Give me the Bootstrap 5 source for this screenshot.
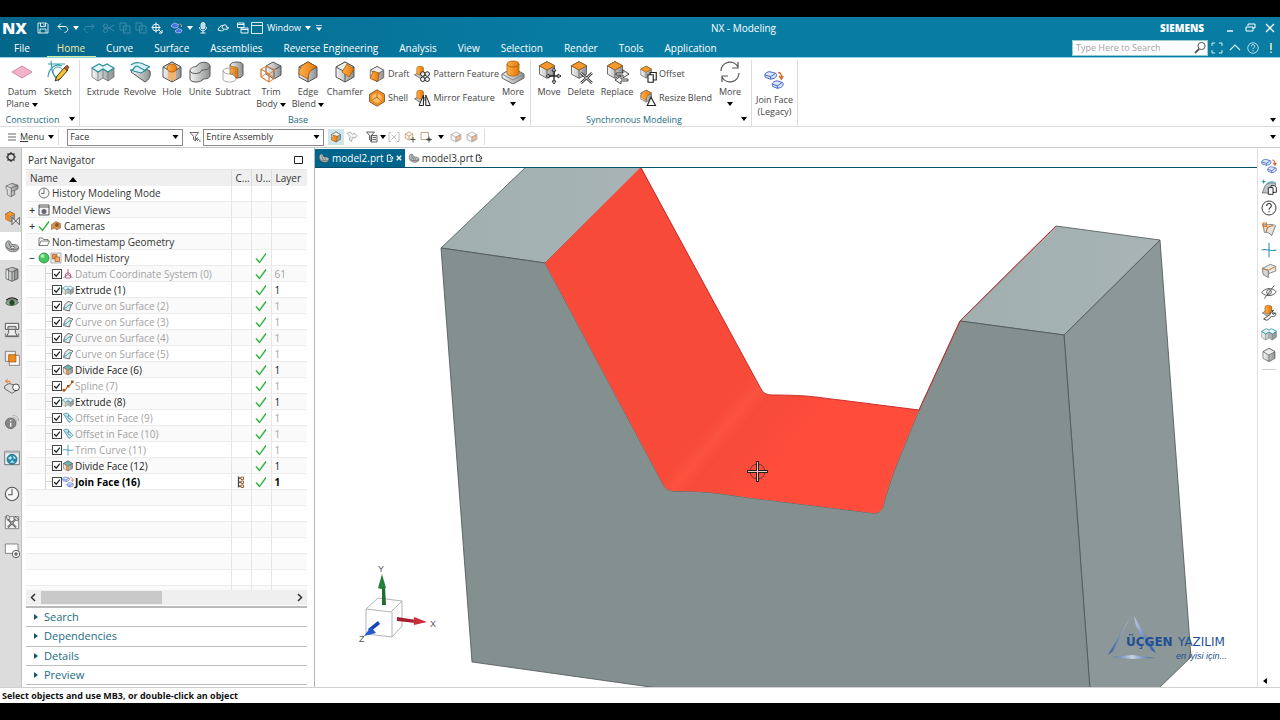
<!DOCTYPE html>
<html lang="en">
<head>
<meta charset="utf-8">
<meta name="viewport" content="width=device-width, initial-scale=1">
<title>NX - Modeling</title>
<link href="https://cdn.jsdelivr.net/npm/bootstrap@5.3.0/dist/css/bootstrap.min.css" rel="stylesheet">
<style>
  :root { --nx-teal:#087ca3; --nx-deep:#00658c; --nx-link:#1b6c80; --nx-line:#dcdcdc; }
  body { font-family:"Open Sans","Noto Sans",sans-serif; font-size:10px; line-height:12px; color:#333; background:#fff; }
  svg { display:block; flex-shrink:0; }
  button { font:inherit; color:inherit; background:none; border:0; padding:0; }
  .app-shell { border-top:17px solid #000; border-bottom:17px solid #000; }
  .i12 { width:12px; height:12px; } .i16 { width:16px; height:16px; } .i24 { width:24px; height:24px; }
  .i14 { width:14px; height:14px; } .i18 { width:18px; height:18px; } .i20 { width:20px; height:24px; }
  .caret { width:0; height:0; border:3px solid transparent; border-top:4px solid currentColor; border-bottom:0; display:inline-block; vertical-align:middle; }
  .carbtn { width:14px; display:flex; justify-content:center; align-items:center; color:#000; }
  .ribbon .caret, .select-row .caret { color:#000; }
  .txt-s { font-size:9px; }

  .head-area { background:linear-gradient(90deg,#03668b,var(--nx-teal) 45%); color:#fff; border-bottom:1px solid #8ed3e6; }
  .title-row { height:22px; }
  .nx-logo { font-size:16px; font-weight:800; width:31px; padding-left:2px; }
  .dimmed { opacity:.22; }
  .brand-name { font-weight:800; font-size:10px; }
  .winbtn { width:20px; } .hdbtn { width:18px; }
  .winbtn, .hdbtn, .qbtn { height:20px; display:flex; align-items:center; justify-content:center; }
  .qbtn { width:16px; } .qcar { width:10px; }
  .menu-row { height:18px; }
  .menu-row .nav-link { padding:0 11px 0 10px; font-size:10px; line-height:18px; color:#fff; border-bottom:1px solid transparent; height:18px; }
  .menu-row .nav-link:first-child { margin-right:6px; }
  .menu-row .nav-link.active { color:#f3e7a1; border-color:#d9ee9a; }
  .find-box { width:136px; height:16px; background:#fff; border:1px solid #9cc; }
  .find-box input { font-size:9px; line-height:12px; padding:0 3px; border:0; background:none; min-height:0; color:#333; border-radius:0; }
  .find-box input::placeholder { color:#a3a3a3; opacity:1; }

  .ribbon { height:69px; border-bottom:1px solid var(--nx-line); color:#444; font-size:9px; }
  .rgroup { border-right:1px solid var(--nx-line); margin:2px 0 0; }
  .rgroup-main { padding:0 3px 0 4px; }
  .rgroup-foot { height:14px; line-height:16px; color:var(--nx-link); }
  .rbtn { display:flex; flex-direction:column; align-items:center; white-space:nowrap; line-height:12px; }
  .rbtn svg { margin-bottom:2px; }
  .w-s { width:28px; } .w-m { width:36px; } .w-l { width:38px; }
  .sbtn { display:flex; align-items:center; height:24px; gap:2px; white-space:nowrap; }
  .scol { padding-top:2px; }
  .vsep { width:1px; height:16px; background:var(--nx-line); }

  .select-row { height:21px; border-bottom:1px solid #c6c6c6; }
  .select-row .form-select { height:17px; font-size:9px; line-height:14px; padding:0 16px 0 2px; border:1px solid #8a8a8a; border-radius:0; color:#333;
    background:#fff url("data:image/svg+xml,%3Csvg xmlns='http://www.w3.org/2000/svg' viewBox='0 0 6 4'%3E%3Cpath d='M0 0h6L3 4z'/%3E%3C/svg%3E") no-repeat right 3px center/7px 4px; }
  .sel-a { width:116px; } .sel-b { width:121px; }
  .lit { background:#cfe6ec; height:16px; }

  .work { height:539px; }
  .res-bar { width:22px; background:#dcdcdc; border-right:1px solid #c2c2c2; }
  .res-bar button { height:28px; display:flex; align-items:center; justify-content:center; width:100%; padding-left:2px; }
  .res-bar .gear { height:18px; margin-bottom:10px; padding:0; }
  .res-bar .current { background:#fff; }
  .nav-panel { width:293px; padding:0 7px 0 4px; border-right:1px solid #b5b5b5; }
  .panel-title { height:21px; padding:2px 4px 0 2px; }
  .tree-wrap { height:421px; overflow:hidden; }
  .tree { table-layout:fixed; width:100%; border-collapse:collapse; white-space:nowrap; }
  .tree th { height:16px; background:#efefef; font-weight:400; font-size:10px; padding:0 0 0 4px; border-right:1px solid #ddd; border-top:1px solid #e4e4e4; }
  .tree td { height:16px; padding:0 0 0 3px; border-right:1px solid #e6e6e6; border-bottom:1px solid #ececec; overflow:hidden; }
  .tree th:last-child, .tree td:last-child { border-right:0; }
  .tree tbody tr:nth-child(even) td { background:#fafafa; }
  .tree .ghost { color:#a2a2a2; }
  .tree .solid td { color:#222; }
  .tree .current-op { font-weight:700; color:#000; }
  .c-sm { width:20px; } .c-ly { width:36px; }
  .node { display:flex; align-items:center; height:15px; }
  .node .twig { width:12px; text-align:center; line-height:10px; margin-left:-3px; font-weight:600; }
  .node .lead-in { width:23px; height:15px; display:flex; justify-content:flex-end; align-items:center; flex-shrink:0; }
  .node .lead-in i { width:7px; height:15px; border-left:1px solid #d5d5d5; background:linear-gradient(#d5d5d5,#d5d5d5) 0 50%/100% 1px no-repeat; }
  .node .form-check-input { width:10px; height:10px; margin:0; border:1px solid #444; border-radius:0; flex-shrink:0; background-color:#fff; }
  .node .form-check-input:checked { background:#fff url("data:image/svg+xml,%3Csvg xmlns='http://www.w3.org/2000/svg' viewBox='0 0 10 10'%3E%3Cpath d='M1.5 5 4 7.8 8.6 2' fill='none' stroke='%23222' stroke-width='1.5'/%3E%3C/svg%3E") center/100%; }
  .node label { margin-left:1px; } .node .nm { margin-left:2px; }
  .hscroll { height:15px; background:#efefef; }
  .hscroll .thumb { width:43%; height:13px; background:#c9c9c9; }
  .fold { height:79px; border-top:2px solid #b9b9b9; margin-top:1px; }
  .fold button { flex:1 1 0; display:flex; align-items:center; gap:6px; padding-left:8px; color:var(--nx-link); font-size:11px; line-height:14px; border-bottom:1px solid #bcbcbc; text-align:left; }
  .fold button::before { content:""; border:3px solid transparent; border-left:4px solid #155a6b; border-right:0; }

  .doc-tabs { height:20px; border-bottom:1px solid #08506c; padding-top:1px; }
  .doc-tab { display:flex; align-items:center; gap:2px; padding:0 3px; color:#333; text-decoration:none; }
  .doc-tab.active { background:var(--nx-deep); color:#fff; }
  .scene { min-height:0; }
  .scene svg { width:100%; height:100%; }
  .side-bar { width:23px; border-left:1px solid #e0e0e0; padding-top:7px; }
  .side-bar button { height:21px; width:100%; display:flex; justify-content:center; align-items:center; }
  .side-bar .expander { height:12px; }
  .status-row { height:16px; border-top:1px solid #d0d0d0; font-size:9px; font-weight:700; color:#111; padding-left:2px; line-height:15px; }
</style>
</head>
<body>
<svg width="0" height="0" class="position-absolute" aria-hidden="true">
  <defs>
    <linearGradient id="g" x1="0" x2="1"><stop offset="0" stop-color="#f4f4f4"/><stop offset="1" stop-color="#8d9091"/></linearGradient>
    <linearGradient id="o" x1="0" x2="1"><stop offset="0" stop-color="#ffb14a"/><stop offset="1" stop-color="#e57708"/></linearGradient>
    <symbol id="plane" viewBox="0 0 24 24"><path d="M2 12 12 6l10 6-10 6z" fill="#f5b3cb" stroke="#c97796" stroke-width=".8"/></symbol>
    <symbol id="sketch" viewBox="0 0 24 24"><path d="M2 4h17M5 1c1 8 0 14 8 20M2 17C3 8 9 3 16 6" fill="none" stroke="#3c9fb0" stroke-width="1.2"/><circle cx="12" cy="12" r="5" fill="none" stroke="#3c9fb0"/><path d="m9 21 2-5 8-9 3 3-8 9z" fill="#f0c332" stroke="#4a3b16"/><path d="m18 8 3-3 2 2-2 4z" fill="#b9553a" stroke="#4a3b16" stroke-width=".6"/></symbol>
    <symbol id="extrude" viewBox="0 0 24 24"><path d="M1 8v9l6 4 5-3 5 3 6-4V8l-6 4-5-3-5 3z" fill="url(#g)" stroke="#6b7375" stroke-width=".8"/><path d="m1 8 7-4 4 2 4-2 7 4-6 4-5-3-5 3z" fill="#e4f6f8" stroke="#2a8e9d" stroke-width="1.2"/><path d="M7 12v9M17 12v9M12 9v9" stroke="#5f6a6c" stroke-width=".7"/></symbol>
    <symbol id="revolve" viewBox="0 0 24 24"><path d="m3 12 14 10c4-2 6-6 5-11L9 4z" fill="url(#g)" stroke="#555"/><path d="M3 5c4-4 7-2 10-2l9 4c-4 0-5 5-9 6L2 10c5 1 3-4 7-4l9 5" fill="#d7f0f3" stroke="#2a8e9d" stroke-width="1.2"/></symbol>
    <symbol id="cube" viewBox="0 0 24 24"><path d="m12 2 9 5v10l-9 5-9-5V7z" fill="url(#g)" stroke="#555"/><path d="m3 7 9 5 9-5-9-5z" fill="#eceded" stroke="#555"/><path d="M12 12v10" stroke="#555"/></symbol>
    <symbol id="hole" viewBox="0 0 24 24"><use href="#cube"/><path d="M8 11h8v8l-4 2-4-2z" fill="#efb473"/><ellipse cx="12" cy="8" rx="5" ry="4" fill="url(#o)" stroke="#8b4a06" stroke-width=".7"/></symbol>
    <symbol id="unite" viewBox="0 0 24 24"><path d="M2 11c0-4 4-4 7-5 2-5 12-5 13 0v9c0 3-3 4-7 4-1 4-13 4-13 0z" fill="url(#g)" stroke="#555"/><path d="M2 11c2 4 11 3 12-1 4 0 8-1 8-4" fill="none" stroke="#555"/></symbol>
    <symbol id="subtract" viewBox="0 0 24 24"><path d="M9 5c1-4 13-4 13 0v9c0 3-3 4-7 4z" fill="url(#g)" stroke="#555"/><path d="M9 5c3 3 8 1 8 4v9c-3 0-4-4-8-4z" fill="url(#o)" stroke="#9b5204" stroke-width=".6"/><path d="M2 11c0-4 13-4 13 0v8c0 4-13 4-13 0zm0 0c2 4 11 4 13 0" fill="none" stroke="#888" stroke-width=".7"/></symbol>
    <symbol id="trim" viewBox="0 0 24 24"><path d="m7 6 7-4 8 4v9l-7 4-8-5z" fill="url(#g)" stroke="#555"/><path d="m7 6 8 4 7-4m-7 4v9" fill="none" stroke="#555"/><path d="m2 9 6-3 8 4-6 4zv8l8 5V14m-8-5 8 5m0 8 6-4" fill="none" stroke="#e0853b"/><path d="M2 9v8l8 5v-8M2 17l6-4 8 5" fill="none" stroke="#e0853b"/></symbol>
    <symbol id="blend" viewBox="0 0 24 24"><use href="#cube"/><path d="M3 14c0-6 3-9 9-12l9 5c-6 2-9 6-9 12z" fill="url(#o)" stroke="#9b5204" stroke-width=".7"/></symbol>
    <symbol id="chamfer" viewBox="0 0 24 24"><use href="#cube"/><path d="m14 4 7 5-5 8-7-5z" fill="url(#o)" stroke="#9b5204" stroke-width=".7"/></symbol>
    <symbol id="ocube" viewBox="0 0 24 24"><use href="#cube"/><path d="m3 7 9 5 9-5-9-5z" fill="#f59a2a" stroke="#9b5204" stroke-width=".8"/></symbol>
    <symbol id="draft" viewBox="0 0 24 24"><use href="#cube"/><path d="m7 8 8 3-2 11-10-4z" fill="url(#o)" stroke="#9b5204"/></symbol>
    <symbol id="shell" viewBox="0 0 24 24"><path d="m12 1 10 6v10l-10 6-10-6V7z" fill="#ef8b1e" stroke="#6b4a27"/><path d="m12 5 6 4v7l-6 3-7-4V9z" fill="#ffbc67"/><path d="M5 15 12 11V5m0 6 6 5" fill="none" stroke="#a4580c"/></symbol>
    <symbol id="pattern" viewBox="0 0 24 24"><path d="m2 13 8-4 8 4-8 5z" fill="#ccc" stroke="#555"/><path d="M5 4c0-3 9-3 9 0v7c0 3-9 3-9 0z" fill="url(#o)" stroke="#9b5204" stroke-width=".7"/><g fill="#eee" stroke="#222" stroke-width="1.3"><circle cx="13" cy="12" r="3"/><circle cx="19" cy="12" r="3"/><circle cx="13" cy="19" r="3"/><circle cx="19" cy="19" r="3"/></g></symbol>
    <symbol id="mirror" viewBox="0 0 24 24"><path d="m2 13 8-4 8 4-8 5z" fill="#ccc" stroke="#555"/><path d="M5 4c0-3 9-3 9 0v7c0 3-9 3-9 0z" fill="url(#o)" stroke="#9b5204" stroke-width=".7"/><path d="M14 8v14H8zm3 0v14h6z" fill="#eee" stroke="#222" stroke-width="1.3"/></symbol>
    <symbol id="boss" viewBox="0 0 24 24"><path d="m1 14 11-6 11 6v4l-11 6-11-6z" fill="url(#g)" stroke="#666"/><path d="m1 14 11 6 11-6" fill="none" stroke="#888"/><path d="M6 4c0-4 12-4 12 0v9c0 4-12 4-12 0z" fill="url(#o)" stroke="#a9640f" stroke-width=".8"/><path d="M6 4c0 4 12 4 12 0" fill="none" stroke="#a9640f"/></symbol>
    <symbol id="move" viewBox="0 0 24 24"><svg width="20" height="20" viewBox="0 0 24 24"><use href="#ocube"/></svg><path d="M17 9v14M10 16h14" stroke="#222" stroke-width="1.3"/><path d="m17 8-2 3h4zm0 16-2-3h4zm-8-8 3-2v4zm15 0-3-2v4z" fill="#fff" stroke="#222" stroke-width=".9"/></symbol>
    <symbol id="delete" viewBox="0 0 24 24"><svg width="20" height="20" viewBox="0 0 24 24"><use href="#ocube"/></svg><path d="m12 13 11 10m0-10L12 23" stroke="#333" stroke-width="2.4"/><path d="m12 13 11 10m0-10L12 23" stroke="#eee" stroke-width="1"/></symbol>
    <symbol id="replace" viewBox="0 0 24 24"><svg width="20" height="20" viewBox="0 0 24 24"><use href="#ocube"/></svg><path d="M11 13h7v-3l6 4-6 4v-3h-7zM23 19h-7v-3l-6 4 6 4v-3h7z" fill="#eee" stroke="#333" stroke-width=".9"/></symbol>
    <symbol id="offset" viewBox="0 0 24 24"><svg width="19" height="19" viewBox="0 0 24 24"><use href="#ocube"/></svg><path d="M12 13h7v10h-7zM15 13v-3h8v10h-4" fill="#fff" stroke="#222" stroke-width="1.5"/></symbol>
    <symbol id="resize" viewBox="0 0 24 24"><svg width="19" height="19" viewBox="0 0 24 24"><use href="#blend"/></svg><path d="m16 11 6 11H11z" fill="#fff" stroke="#222" stroke-width="1.5"/></symbol>
    <symbol id="cycle" viewBox="0 0 24 24"><path d="M3 11a9 9 0 0 1 17-4M21 13a9 9 0 0 1-17 4M20 2v6h-6M4 22v-6h6" fill="none" stroke="#555" stroke-width="1.2"/></symbol>
    <symbol id="join" viewBox="0 0 24 24"><g fill="#dbe5fc" stroke="#4668c8" stroke-width="1.2"><path d="M1 6c0-2 3-4 6-4l7 2c2 1 1 5-2 6l-4 1-6-2c-1 0-1-2-1-3z"/><path d="M10 17c0-2 3-4 6-4l6 2c2 1 1 5-2 6l-4 1-5-2c-1 0-1-2-1-3z"/><path d="m1 6 7 2 6-4M8 8v3m2 6 6 2 6-4m-6 4v3" fill="none"/></g><path d="M17 3c4 0 4 3 4 6m-3-2 3 4 2-4" fill="none" stroke="#d3682c" stroke-width="1.6"/></symbol>
    <symbol id="clock" viewBox="0 0 24 24"><circle cx="12" cy="12" r="10" fill="#f6f6f6" stroke="#555" stroke-width="1.6"/><path d="M12 4v9H6" fill="none" stroke="#555" stroke-width="1.6"/></symbol>
    <symbol id="views" viewBox="0 0 24 24"><path d="M2 2h20v20H2zM2 6h20" fill="#f4f4f4" stroke="#444" stroke-width="1.8"/><circle cx="12" cy="15" r="5" fill="#667"/></symbol>
    <symbol id="folder" viewBox="0 0 24 24"><path d="M2 19V4h7l2 3h9v3M2 19l4-9h17l-4 9z" fill="none" stroke="#555" stroke-width="1.5"/></symbol>
    <symbol id="tick" viewBox="0 0 24 24"><path d="m2 13 7 8L22 3" fill="none" stroke="#2fb440" stroke-width="2.8"/></symbol>
    <symbol id="cam" viewBox="0 0 24 24"><path d="m3 9 9-6 9 4v9l-8 4-3-4-7 3z" fill="#d99350" stroke="#6e4c2a"/><circle cx="14" cy="10" r="4" fill="#8b5b2c"/></symbol>
    <symbol id="ball" viewBox="0 0 24 24"><circle cx="12" cy="12" r="10" fill="#45c95e" stroke="#277a36" stroke-width="1.5"/><circle cx="9" cy="8" r="4" fill="#a7eeb4"/></symbol>
    <symbol id="hist" viewBox="0 0 24 24"><path d="M2 2h20v20H2z" fill="#f4f0ea" stroke="#666"/><path d="M5 5h9v9H5z" fill="#f09331" stroke="#633"/><path d="M10 10h9v9h-9z" fill="#f6ad5a" stroke="#633"/></symbol>
    <symbol id="csys" viewBox="0 0 24 24"><path d="M12 13V2M12 13 3 19M12 13l9 6M7 12v8h10v-8l-5-3z" fill="none" stroke="#b5668f" stroke-width="2"/></symbol>
    <symbol id="cosurf" viewBox="0 0 24 24"><path d="M3 19C4 11 8 5 13 3l9 3c-4 4-6 9-7 16z" fill="#e1ecec" stroke="#444" stroke-width="1.5"/><path d="M4 16c7 1 7-8 15-6" fill="none" stroke="#2a8e9d" stroke-width="2"/></symbol>
    <symbol id="divide" viewBox="0 0 24 24"><use href="#cube"/><path d="m3 7 9-5 9 5-9 5z" fill="#68b6b6" stroke="#555"/><path d="m3 7 9 5v10l-4-2V12z" fill="#e69343"/></symbol>
    <symbol id="spline" viewBox="0 0 24 24"><path d="M2 21c9 2 5-8 11-9 5-1 4-5 9-9" fill="none" stroke="#c96a20" stroke-width="2.5"/><path d="M1 18h5v5H1zM10 10h5v5h-5zM18 1h5v5h-5z" fill="#a4541a"/></symbol>
    <symbol id="oface" viewBox="0 0 24 24"><path d="m3 4 8-2 11 13-8 6z" fill="#d8eef3" stroke="#3b8ea5" stroke-width="1.6"/><path d="m8 7 9 9M12 5l2 5" stroke="#3b8ea5" stroke-width="2"/></symbol>
    <symbol id="cross" viewBox="0 0 24 24"><path d="M12 1v22M1 12c6-3 14 3 22 0" fill="none" stroke="#2c93b8" stroke-width="1.6"/></symbol>
    <symbol id="mark3" viewBox="0 0 24 24"><path d="M7 1v22M7 4h8M7 12h8M7 20h8" stroke="#444" stroke-width="2.5"/><path d="M12 2h5v5h-5zM12 10h5v5h-5zM12 18h5v5h-5z" fill="#fff" stroke="#a36332" stroke-width="2"/></symbol>
    <symbol id="disc" viewBox="0 0 24 24"><path d="M3 14C1 8 5 2 9 5l3 5c8-1 11 3 10 6-2 6-16 7-19-2z" fill="#b8bcbd" stroke="#444"/><path d="M4 13c2 6 15 5 18 2M7 7l3 7" fill="none" stroke="#444"/><ellipse cx="13" cy="14" rx="3" ry="1.6" fill="#fff" stroke="#444"/></symbol>
    <symbol id="gear" viewBox="0 0 24 24"><circle cx="12" cy="12" r="6.5" fill="none" stroke="#333" stroke-width="2.6"/><path d="M12 2v3M12 19v3M2 12h3M19 12h3M5 5l2 2M17 17l2 2M5 19l2-2M17 7l2-2" stroke="#333" stroke-width="2.4"/></symbol>
    <symbol id="asm" viewBox="0 0 24 24"><path d="m3 6 9-4 9 3v5l-5 3v6l-6 3-5-3v-8l-2-1z" fill="url(#g)" stroke="#555"/><path d="m3 6 8 3 10-4M11 9v13M11 14l5-2" fill="none" stroke="#555"/></symbol>
    <symbol id="constr" viewBox="0 0 24 24"><svg width="18" height="20" viewBox="0 0 24 24"><use href="#ocube"/><path d="m3 7 9 5v10l-9-5z" fill="#ee8a1e"/></svg><path d="m12 11 11 11V11L12 22z" fill="#eee" stroke="#333" stroke-width="1.2"/></symbol>
    <symbol id="book" viewBox="0 0 24 24"><path d="M3 5 13 2l8 3v14l-9 4-9-4z" fill="url(#g)" stroke="#444"/><path d="m3 5 9 4v14M12 9l9-4M7 4v17M16 7v14" fill="none" stroke="#444"/></symbol>
    <symbol id="eye" viewBox="0 0 24 24"><path d="M1 14C6 5 17 5 23 13c-6 6-16 7-22 1z" fill="#8cae8c" stroke="#222"/><circle cx="12" cy="13" r="4.5" fill="#23492a"/><path d="M2 9C8 3 17 4 22 9" fill="none" stroke="#222" stroke-width="2"/></symbol>
    <symbol id="proc" viewBox="0 0 24 24"><path d="M2 2h20v9h-4v-4H6v4H2zM7 11h10v5l3 5H4l3-5z" fill="#eee" stroke="#444" stroke-width="1.3"/><path d="M2 17v5h20v-5" fill="none" stroke="#444"/></symbol>
    <symbol id="squares" viewBox="0 0 24 24"><path d="M2 2h15v15H2z" fill="#eee" stroke="#555"/><path d="M8 8h15v15H8z" fill="#fff" stroke="#555"/><path d="M7 7h11v11H7z" fill="#f08a1d" stroke="#9b5204"/></symbol>
    <symbol id="tag" viewBox="0 0 24 24"><path d="m1 12 7-4 13 5v4l-9 6L1 16z" fill="#ddd" stroke="#333"/><circle cx="18" cy="14" r="5" fill="#fff" stroke="#333" stroke-width="1.3"/><path d="M2 5h7v5M2 5l4-3m-4 3 4 3" fill="none" stroke="#e0853b" stroke-width="1.5"/></symbol>
    <symbol id="info" viewBox="0 0 24 24"><path d="M13 2c6 0 9 4 9 9M13 5c4 0 6 3 6 6" fill="none" stroke="#aaa" stroke-width="1.3"/><circle cx="10" cy="14" r="8" fill="#858585" stroke="#555"/><path d="M10 9v2m0 2v6" stroke="#fff" stroke-width="2"/></symbol>
    <symbol id="globe" viewBox="0 0 24 24"><path d="M1 2h22v20H1z" fill="#e5f1f7" stroke="#444"/><path d="M1 2h22v3H1z" fill="#bbb"/><circle cx="12" cy="14" r="7.5" fill="#2687ad" stroke="#1c5870"/><path d="M6 12l4-3 2 3-3 3zM13 8l5 4-3 2zM9 19l3-4 4 4z" fill="#bfe6ef"/></symbol>
    <symbol id="tools" viewBox="0 0 24 24"><path d="M2 4h20v18H2z" fill="#f4f4f4" stroke="#555"/><path d="m6 8 12 12M18 7 6 20" stroke="#444" stroke-width="3"/><path d="m6 8 12 12M18 7 6 20" stroke="#ddd"/><path d="M3 3c3-3 7 1 5 5l-3 1z" fill="#ddd" stroke="#444"/><path d="m14 6 4-2 4 5-3 1z" fill="#ddd" stroke="#444"/></symbol>
    <symbol id="addwin" viewBox="0 0 24 24"><path d="M2 3h19v14H2z" fill="#fff" stroke="#555"/><circle cx="18" cy="18" r="5.5" fill="#fff" stroke="#333" stroke-width="1.2"/><path d="M18 15v6M15 18h6" stroke="#333" stroke-width="1.4"/></symbol>
    <symbol id="help" viewBox="0 0 24 24"><circle cx="12" cy="12" r="10.5" fill="none" stroke="currentColor" stroke-width="1.4"/><path d="M8.5 9c0-5 7-5 7-.5 0 3-3.5 3-3.5 6M12 16.5v2" fill="none" stroke="currentColor" stroke-width="1.6"/></symbol>
    <symbol id="sheet" viewBox="0 0 24 24"><path d="M3 5c7 2 11-2 19 2l-6 15C14 18 9 17 5 17z" fill="#e2e2e2" stroke="#555"/><path d="M8 17c0-7 2-9 10-10M3 3h5v5H3z" fill="none" stroke="#dc7a28" stroke-width="1.8"/></symbol>
    <symbol id="extract" viewBox="0 0 24 24"><path d="M2 21 6 10c5-5 12-5 16-3l-3 14z" fill="#bfc7c8" stroke="#555"/><path d="M4 1v6M1 4h6M8 8c4-4 10-5 14-2" stroke="#2a9aa8" stroke-width="1.5" fill="none"/><path d="M11 13h7v10h-7zM15 13v-3h5l3 3v7h-5" fill="#fff" stroke="#222" stroke-width="1.4"/></symbol>
    <symbol id="foldface" viewBox="0 0 24 24"><path d="m2 8 12-6 8 3v7l-11 4z" fill="#e8e8e8" stroke="#555"/><path d="m2 8 9 3v11l-8-5z" fill="#d6d6d6" stroke="#555"/><path d="m2 8 9 3 11-6" fill="none" stroke="#d07a31" stroke-width="1.5"/></symbol>
    <symbol id="hide" viewBox="0 0 24 24"><path d="M1 13C6 5 18 5 23 12c-6 7-16 7-22 1zM20 2 5 22" fill="none" stroke="#555" stroke-width="1.4"/><circle cx="12" cy="12" r="3.5" fill="none" stroke="#555" stroke-width="1.4"/></symbol>
    <symbol id="wrench" viewBox="0 0 24 24"><path d="m2 12 9-5 10 5-9 6z" fill="#ccc" stroke="#555"/><path d="M6 3c0-3 10-3 10 0v8c0 3-10 3-10 0z" fill="url(#o)" stroke="#9b5204"/><path d="m4 21 5 2 7-6c5 1 7-2 6-5l-4 2-2-3 3-3c-4 0-6 3-5 6z" fill="#fff" stroke="#333" stroke-width="1.3"/></symbol>
    <symbol id="save" viewBox="0 0 24 24"><path d="M2 2h17l3 3v17H2zM7 2v7h10V2M6 22v-8h12v8M14 4v3" fill="none" stroke="#fff" stroke-width="1.7"/></symbol>
    <symbol id="undo" viewBox="0 0 24 24"><path d="M8 3 2 9l6 6M2 9h14c8 1 7 11-1 12" fill="none" stroke="currentColor" stroke-width="1.9"/></symbol>
    <symbol id="redo" viewBox="0 0 24 24"><path d="m16 3 6 6-6 6M22 9H8C0 10 1 20 9 21" fill="none" stroke="currentColor" stroke-width="1.9"/></symbol>
    <symbol id="cut" viewBox="0 0 24 24"><path d="m9 14 13-8M9 10l13 8" stroke="#fff" stroke-width="2"/><circle cx="5" cy="8" r="4" fill="none" stroke="#fff" stroke-width="2"/><circle cx="5" cy="17" r="4" fill="none" stroke="#fff" stroke-width="2"/></symbol>
    <symbol id="copy" viewBox="0 0 24 24"><path d="M2 2h12v14H2zM9 8h13v14H9z" fill="none" stroke="#fff" stroke-width="2"/></symbol>
    <symbol id="aim" viewBox="0 0 24 24"><circle cx="10" cy="11" r="7" fill="none" stroke="#fff" stroke-width="1.8"/><path d="M10 1v20M1 11h18M15 15l7 7m0-6v6h-6" stroke="#fff" stroke-width="2" fill="none"/></symbol>
    <symbol id="joinlite" viewBox="0 0 24 24"><path d="m1 6 6-4 8 3-2 6-6 1-6-3zM9 17l6-4 7 3-2 5-6 1-5-2z" fill="#4a6fe0" stroke="#cfdcff" stroke-width="1.2"/><path d="M17 4c4 0 4 3 4 6" fill="none" stroke="#e8a070" stroke-width="2"/></symbol>
    <symbol id="mic" viewBox="0 0 24 24"><rect x="8" y="1" width="8" height="13" rx="4" fill="#b8dce7" stroke="#fff" stroke-width="1.6"/><path d="M5 10c0 10 14 10 14 0M12 18v4M7 22h10" fill="none" stroke="#fff" stroke-width="1.8"/></symbol>
    <symbol id="hand" viewBox="0 0 24 24"><path d="M2 16c2-6 5-9 10-9 4-3 9 0 6 3l5 1c0 4-5 4-8 3-3 5-8 4-13 2zM12 7c-2 2-3 7 2 7" fill="none" stroke="#fff" stroke-width="2"/></symbol>
    <symbol id="cascade" viewBox="0 0 24 24"><path d="M1 2h13v9H1zM1 5h13M8 12h14v10H8zM8 15h14" fill="none" stroke="#fff" stroke-width="1.8"/></symbol>
    <symbol id="winic" viewBox="0 0 24 24"><path d="M1 1h22v22H1zM1 7h22" fill="none" stroke="#fff" stroke-width="1.7"/></symbol>
    <symbol id="funnel" viewBox="0 0 24 24"><path d="M2 3h17l-6 8v9l-4-3v-6z" fill="#eee" stroke="#444" stroke-width="1.5"/><path d="M22 22c0-5-3-6-7-6m3-3-4 3 4 4" fill="none" stroke="#444" stroke-width="1.6"/></symbol>
    <symbol id="filt2" viewBox="0 0 24 24"><path d="M1 2h16l-6 7v11l-4-3V9zM10 9h12v13H10zM13 13h7M13 17h7" fill="#eee" stroke="#444" stroke-width="1.6"/></symbol>
    <symbol id="desel" viewBox="0 0 24 24"><path d="m2 5 6-3 5 4 5-1 4 4-4 5-5-1-2 8-4-3 1-7z" fill="#f2f2f2" stroke="#999" stroke-width="1.5"/></symbol>
    <symbol id="snap" viewBox="0 0 24 24"><path d="M6 3H2v18h4M18 3h4v18h-4M7 7l10 10M7 17 17 7" fill="none" stroke="#aaa" stroke-width="1.5"/></symbol>
    <symbol id="selbox" viewBox="0 0 24 24"><path d="M2 3h15v14H2z" fill="#fff" stroke="#a58b58" stroke-width="1.5"/><path d="M18 11v12M12 17h12M15 14l6 6m0-6-6 6" stroke="#333" stroke-width="1.6"/></symbol>
    <symbol id="selcube" viewBox="0 0 24 24"><svg width="20" height="20" viewBox="0 0 24 24"><path d="m12 2 9 5v10l-9 5-9-5V7zM3 7l9 5 9-5M12 12v10" fill="#fdf0dc" stroke="#a58b58" stroke-width="1.5"/></svg><path d="M18 12v11M13 17h10" stroke="#555" stroke-width="2"/></symbol>
    <symbol id="wire" viewBox="0 0 24 24"><path d="m12 2 10 5v10l-10 5-10-5V7zM2 7l10 5 10-5M12 12v10" fill="#f4f4f4" stroke="#999" stroke-width="1.3"/><path d="M12 12v8l8-4V8z" fill="#f0c4a0" stroke="#a97b58"/></symbol>
    <symbol id="docmod" viewBox="0 0 24 24"><path d="M15 3H4v19h14v-4M11 3l6 4-4 5M20 8v7h-7" fill="none" stroke="currentColor" stroke-width="3"/></symbol>
  </defs>
</svg>

<div class="app-shell d-flex flex-column">
  <header class="head-area">
    <div class="title-row d-flex align-items-center">
      <span class="nx-logo">NX</span>
      <button class="qbtn ms-1" aria-label="Save"><svg class="i12"><use href="#save"/></svg></button>
      <button class="qbtn ms-1" aria-label="Undo"><svg class="i12"><use href="#undo"/></svg></button>
      <button class="qbtn qcar" aria-label="Undo list"><span class="caret"></span></button>
      <button class="qbtn dimmed" aria-label="Redo"><svg class="i12"><use href="#redo"/></svg></button>
      <button class="qbtn dimmed ms-1" aria-label="Cut"><svg class="i12"><use href="#cut"/></svg></button>
      <button class="qbtn dimmed" aria-label="Copy"><svg class="i12"><use href="#copy"/></svg></button>
      <button class="qbtn dimmed" aria-label="Paste"><svg class="i12"><use href="#copy"/></svg></button>
      <button class="qbtn" aria-label="Repeat command"><svg class="i12"><use href="#aim"/></svg></button>
      <button class="qbtn ms-1" aria-label="Join Face"><svg class="i12"><use href="#joinlite"/></svg></button>
      <button class="qbtn qcar" aria-label="Recent commands"><span class="caret"></span></button>
      <button class="qbtn" aria-label="Voice"><svg class="i12"><use href="#mic"/></svg></button>
      <button class="qbtn ms-1" aria-label="Touch mode"><svg class="i12"><use href="#hand"/></svg></button>
      <button class="qbtn ms-1" aria-label="Switch window"><svg class="i12"><use href="#cascade"/></svg></button>
      <button class="d-flex align-items-center gap-1 txt-s"><svg class="i12"><use href="#winic"/></svg><span>Window</span><span class="caret"></span></button>
      <button class="qbtn" aria-label="Customize toolbar"><svg width="6" height="6" viewBox="0 0 7 7"><path d="M0 0h7v1H0zM0 3h7L3.5 7z" fill="#fff"/></svg></button>
      <span class="flex-fill text-center">NX - Modeling</span>
      <span class="brand-name me-3">SIEMENS</span>
      <button class="winbtn" aria-label="Minimize"><svg class="i12" viewBox="0 0 12 12"><path d="M3 9h6" stroke="#fff" stroke-width="1.4"/></svg></button>
      <button class="winbtn" aria-label="Restore"><svg class="i12" viewBox="0 0 12 12"><path d="M4 4V2h7v4H9M2 5h7v4H2z" fill="none" stroke="#fff"/></svg></button>
      <button class="winbtn" aria-label="Close"><svg class="i12" viewBox="0 0 12 12"><path d="m2 2 8 8m0-8-8 8" stroke="#fff" stroke-width="1.3"/></svg></button>
    </div>
    <div class="menu-row d-flex align-items-center">
      <nav class="nav flex-nowrap flex-fill ps-1">
        <a class="nav-link" href="#">File</a><a class="nav-link active" href="#">Home</a><a class="nav-link" href="#">Curve</a><a class="nav-link" href="#">Surface</a><a class="nav-link" href="#">Assemblies</a><a class="nav-link" href="#">Reverse Engineering</a><a class="nav-link" href="#">Analysis</a><a class="nav-link" href="#">View</a><a class="nav-link" href="#">Selection</a><a class="nav-link" href="#">Render</a><a class="nav-link" href="#">Tools</a><a class="nav-link" href="#">Application</a>
      </nav>
      <div class="find-box d-flex align-items-center">
        <input class="form-control shadow-none" type="text" placeholder="Type Here to Search" aria-label="Search commands">
        <svg class="i14" viewBox="0 0 14 14"><circle cx="8.5" cy="5" r="3.6" fill="none" stroke="#555"/><path d="M6 8 2 12" stroke="#555" stroke-width="1.8"/></svg>
      </div>
      <button class="hdbtn" aria-label="Full screen"><svg class="i12" viewBox="0 0 12 12"><path d="M1 4V1h3M8 1h3v3M11 8v3H8M4 11H1V8" fill="none" stroke="#d5edf3"/></svg></button>
      <button class="hdbtn" aria-label="Collapse ribbon"><svg class="i12" viewBox="0 0 12 12"><path d="m1 8 5-5 5 5" fill="none" stroke="#d5edf3" stroke-width="1.2"/></svg></button>
      <button class="hdbtn" aria-label="Help"><svg class="i12"><use href="#help"/></svg></button>
      <button class="hdbtn" aria-label="Alerts"><svg class="i12" viewBox="0 0 12 12"><path d="M6 1v7M6 9.5V11" stroke="#f5efb0" stroke-width="1.5"/></svg></button>
    </div>
  </header>

  <section class="ribbon d-flex">
    <div class="rgroup d-flex flex-column">
      <div class="rgroup-main d-flex flex-fill">
        <button class="rbtn w-m"><svg class="i24"><use href="#plane"/></svg>Datum<span>Plane <i class="caret"></i></span></button>
        <button class="rbtn w-m"><svg class="i24"><use href="#sketch"/></svg>Sketch</button>
      </div>
      <div class="rgroup-foot d-flex"><span class="flex-fill text-center">Construction</span><button class="carbtn" aria-label="Construction options"><i class="caret"></i></button></div>
    </div>
    <div class="rgroup d-flex flex-column">
      <div class="rgroup-main d-flex flex-fill">
        <button class="rbtn w-l"><svg class="i24"><use href="#extrude"/></svg>Extrude</button>
        <button class="rbtn w-m"><svg class="i24"><use href="#revolve"/></svg>Revolve</button>
        <button class="rbtn w-s"><svg class="i24"><use href="#hole"/></svg>Hole</button>
        <button class="rbtn w-s"><svg class="i24"><use href="#unite"/></svg>Unite</button>
        <button class="rbtn w-l"><svg class="i24"><use href="#subtract"/></svg>Subtract</button>
        <button class="rbtn w-l"><svg class="i24"><use href="#trim"/></svg>Trim<span>Body <i class="caret"></i></span></button>
        <button class="rbtn w-m"><svg class="i24"><use href="#blend"/></svg>Edge<span>Blend <i class="caret"></i></span></button>
        <button class="rbtn w-l"><svg class="i24"><use href="#chamfer"/></svg>Chamfer</button>
        <div class="scol mx-1">
          <button class="sbtn"><svg class="i18"><use href="#draft"/></svg>Draft</button>
          <button class="sbtn"><svg class="i18"><use href="#shell"/></svg>Shell</button>
        </div>
        <div class="scol">
          <button class="sbtn"><svg class="i18"><use href="#pattern"/></svg>Pattern Feature</button>
          <button class="sbtn"><svg class="i18"><use href="#mirror"/></svg>Mirror Feature</button>
        </div>
        <button class="rbtn w-s"><svg class="i24"><use href="#boss"/></svg>More<i class="caret mt-1"></i></button>
      </div>
      <div class="rgroup-foot d-flex"><span class="flex-fill text-center">Base</span><button class="carbtn" aria-label="Base options"><i class="caret"></i></button></div>
    </div>
    <div class="rgroup d-flex flex-column">
      <div class="rgroup-main d-flex flex-fill">
        <button class="rbtn w-s"><svg class="i24"><use href="#move"/></svg>Move</button>
        <button class="rbtn w-m"><svg class="i24"><use href="#delete"/></svg>Delete</button>
        <button class="rbtn w-m"><svg class="i24"><use href="#replace"/></svg>Replace</button>
        <div class="scol ps-1">
          <button class="sbtn"><svg class="i18"><use href="#offset"/></svg>Offset</button>
          <button class="sbtn"><svg class="i18"><use href="#resize"/></svg>Resize Blend</button>
        </div>
        <button class="rbtn w-s mx-1"><svg class="i24"><use href="#cycle"/></svg>More<i class="caret mt-1"></i></button>
      </div>
      <div class="rgroup-foot d-flex"><span class="flex-fill text-center">Synchronous Modeling</span><button class="carbtn" aria-label="Synchronous Modeling options"><i class="caret"></i></button></div>
    </div>
    <div class="rgroup d-flex px-1">
      <button class="rbtn pt-2"><svg class="i20"><use href="#join"/></svg>Join Face<span>(Legacy)</span></button>
    </div>
    <button class="carbtn ms-auto align-self-end pb-1" aria-label="Ribbon options"><i class="caret"></i></button>
  </section>

  <section class="select-row d-flex align-items-center">
    <button class="d-flex align-items-center gap-1 ps-2 txt-s"><svg width="8" height="8" viewBox="0 0 8 8"><path d="M0 1h8M0 4h8M0 7h8" stroke="#555" stroke-width=".9"/></svg><span><u>M</u>enu</span><i class="caret"></i></button>
    <span class="vsep mx-1"></span>
    <select class="form-select sel-a ms-1" aria-label="Selection type"><option>Face</option></select>
    <button class="qbtn ms-1" aria-label="Filter"><svg class="i12"><use href="#funnel"/></svg></button>
    <select class="form-select sel-b me-1" aria-label="Selection scope"><option>Entire Assembly</option></select>
    <button class="qbtn lit" aria-label="Highlight"><svg class="i12"><use href="#draft"/></svg></button>
    <button class="qbtn" aria-label="Deselect"><svg class="i12"><use href="#desel"/></svg></button>
    <button class="qbtn ms-1" aria-label="General filters"><svg class="i12"><use href="#filt2"/></svg></button>
    <span class="caret"></span>
    <button class="qbtn" aria-label="Snap"><svg class="i12"><use href="#snap"/></svg></button>
    <button class="qbtn" aria-label="Select body"><svg class="i12"><use href="#selcube"/></svg></button>
    <button class="qbtn" aria-label="Select box"><svg class="i12"><use href="#selbox"/></svg></button>
    <button class="carbtn" aria-label="Select options"><i class="caret"></i></button>
    <button class="qbtn" aria-label="Shaded"><svg class="i12"><use href="#wire"/></svg></button>
    <button class="qbtn me-1" aria-label="Wireframe"><svg class="i12"><use href="#wire"/></svg></button>
    <span class="vsep"></span>
    <button class="carbtn ms-auto" aria-label="Bar options"><i class="caret"></i></button>
  </section>

  <main class="work d-flex">
    <div class="res-bar">
      <button class="gear" aria-label="Settings"><svg class="i12"><use href="#gear"/></svg></button>
      <button aria-label="Assembly Navigator"><svg class="i16"><use href="#asm"/></svg></button>
      <button aria-label="Constraint Navigator"><svg class="i16"><use href="#constr"/></svg></button>
      <button class="current" aria-label="Part Navigator"><svg class="i16"><use href="#disc"/></svg></button>
      <button aria-label="Reuse Library"><svg class="i16"><use href="#book"/></svg></button>
      <button aria-label="View Manager"><svg class="i14"><use href="#eye"/></svg></button>
      <button aria-label="Process Studio"><svg class="i16"><use href="#proc"/></svg></button>
      <button aria-label="Roles"><svg class="i16"><use href="#squares"/></svg></button>
      <button aria-label="Tags"><svg class="i16"><use href="#tag"/></svg></button>
      <button class="mt-2" aria-label="Information"><svg class="i16"><use href="#info"/></svg></button>
      <button class="mt-2" aria-label="Web browser"><svg class="i16"><use href="#globe"/></svg></button>
      <button class="mt-2" aria-label="History"><svg class="i16"><use href="#clock"/></svg></button>
      <button aria-label="Tools"><svg class="i16"><use href="#tools"/></svg></button>
      <button aria-label="Add palette"><svg class="i16"><use href="#addwin"/></svg></button>
    </div>

    <aside class="nav-panel d-flex flex-column">
      <div class="panel-title d-flex align-items-center justify-content-between"><span>Part Navigator</span><button aria-label="Undock"><svg width="9" height="9" viewBox="0 0 9 9"><path d="M.5 1.5h8v7h-8z" fill="#fff" stroke="#222"/></svg></button></div>
      <div class="tree-wrap">
        <table class="tree">
          <colgroup><col><col class="c-sm"><col class="c-sm"><col class="c-ly"></colgroup>
          <thead><tr><th>Name <svg class="d-inline ms-2" width="8" height="5" viewBox="0 0 8 5"><path d="M0 5h8L4 0z"/></svg></th><th>C...</th><th>U...</th><th>Layer</th></tr></thead>
          <tbody>
            <tr><td><div class="node"><span class="twig"></span><svg class="i12"><use href="#clock"/></svg><span class="nm">History Modeling Mode</span></div></td><td></td><td></td><td></td></tr>
            <tr><td><div class="node"><span class="twig">+</span><svg class="i12"><use href="#views"/></svg><span class="nm">Model Views</span></div></td><td></td><td></td><td></td></tr>
            <tr><td><div class="node"><span class="twig">+</span><svg class="i12"><use href="#tick"/></svg><svg class="i12"><use href="#cam"/></svg><span class="nm">Cameras</span></div></td><td></td><td></td><td></td></tr>
            <tr><td><div class="node"><span class="twig"></span><svg class="i12"><use href="#folder"/></svg><span class="nm">Non-timestamp Geometry</span></div></td><td></td><td></td><td></td></tr>
            <tr><td><div class="node"><span class="twig">−</span><svg class="i12"><use href="#ball"/></svg><svg class="i12"><use href="#hist"/></svg><span class="nm">Model History</span></div></td><td></td><td><svg class="i12"><use href="#tick"/></svg></td><td></td></tr>
            <tr class="ghost"><td><div class="node"><span class="lead-in"><i></i></span><input class="form-check-input" type="checkbox" id="f0" checked><svg class="i12"><use href="#csys"/></svg><label for="f0">Datum Coordinate System (0)</label></div></td><td></td><td><svg class="i12"><use href="#tick"/></svg></td><td>61</td></tr>
            <tr class="solid"><td><div class="node"><span class="lead-in"><i></i></span><input class="form-check-input" type="checkbox" id="f1" checked><svg class="i12"><use href="#extrude"/></svg><label for="f1">Extrude (1)</label></div></td><td></td><td><svg class="i12"><use href="#tick"/></svg></td><td>1</td></tr>
            <tr class="ghost"><td><div class="node"><span class="lead-in"><i></i></span><input class="form-check-input" type="checkbox" id="f2" checked><svg class="i12"><use href="#cosurf"/></svg><label for="f2">Curve on Surface (2)</label></div></td><td></td><td><svg class="i12"><use href="#tick"/></svg></td><td>1</td></tr>
            <tr class="ghost"><td><div class="node"><span class="lead-in"><i></i></span><input class="form-check-input" type="checkbox" id="f3" checked><svg class="i12"><use href="#cosurf"/></svg><label for="f3">Curve on Surface (3)</label></div></td><td></td><td><svg class="i12"><use href="#tick"/></svg></td><td>1</td></tr>
            <tr class="ghost"><td><div class="node"><span class="lead-in"><i></i></span><input class="form-check-input" type="checkbox" id="f4" checked><svg class="i12"><use href="#cosurf"/></svg><label for="f4">Curve on Surface (4)</label></div></td><td></td><td><svg class="i12"><use href="#tick"/></svg></td><td>1</td></tr>
            <tr class="ghost"><td><div class="node"><span class="lead-in"><i></i></span><input class="form-check-input" type="checkbox" id="f5" checked><svg class="i12"><use href="#cosurf"/></svg><label for="f5">Curve on Surface (5)</label></div></td><td></td><td><svg class="i12"><use href="#tick"/></svg></td><td>1</td></tr>
            <tr class="solid"><td><div class="node"><span class="lead-in"><i></i></span><input class="form-check-input" type="checkbox" id="f6" checked><svg class="i12"><use href="#divide"/></svg><label for="f6">Divide Face (6)</label></div></td><td></td><td><svg class="i12"><use href="#tick"/></svg></td><td>1</td></tr>
            <tr class="ghost"><td><div class="node"><span class="lead-in"><i></i></span><input class="form-check-input" type="checkbox" id="f7" checked><svg class="i12"><use href="#spline"/></svg><label for="f7">Spline (7)</label></div></td><td></td><td><svg class="i12"><use href="#tick"/></svg></td><td>1</td></tr>
            <tr class="solid"><td><div class="node"><span class="lead-in"><i></i></span><input class="form-check-input" type="checkbox" id="f8" checked><svg class="i12"><use href="#extrude"/></svg><label for="f8">Extrude (8)</label></div></td><td></td><td><svg class="i12"><use href="#tick"/></svg></td><td>1</td></tr>
            <tr class="ghost"><td><div class="node"><span class="lead-in"><i></i></span><input class="form-check-input" type="checkbox" id="f9" checked><svg class="i12"><use href="#oface"/></svg><label for="f9">Offset in Face (9)</label></div></td><td></td><td><svg class="i12"><use href="#tick"/></svg></td><td>1</td></tr>
            <tr class="ghost"><td><div class="node"><span class="lead-in"><i></i></span><input class="form-check-input" type="checkbox" id="f10" checked><svg class="i12"><use href="#oface"/></svg><label for="f10">Offset in Face (10)</label></div></td><td></td><td><svg class="i12"><use href="#tick"/></svg></td><td>1</td></tr>
            <tr class="ghost"><td><div class="node"><span class="lead-in"><i></i></span><input class="form-check-input" type="checkbox" id="f11" checked><svg class="i12"><use href="#cross"/></svg><label for="f11">Trim Curve (11)</label></div></td><td></td><td><svg class="i12"><use href="#tick"/></svg></td><td>1</td></tr>
            <tr class="solid"><td><div class="node"><span class="lead-in"><i></i></span><input class="form-check-input" type="checkbox" id="f12" checked><svg class="i12"><use href="#divide"/></svg><label for="f12">Divide Face (12)</label></div></td><td></td><td><svg class="i12"><use href="#tick"/></svg></td><td>1</td></tr>
            <tr class="current-op"><td><div class="node"><span class="lead-in"><i></i></span><input class="form-check-input" type="checkbox" id="f16" checked><svg class="i12"><use href="#join"/></svg><label for="f16">Join Face (16)</label></div></td><td><svg class="i12"><use href="#mark3"/></svg></td><td><svg class="i12"><use href="#tick"/></svg></td><td>1</td></tr>
            <tr><td></td><td></td><td></td><td></td></tr><tr><td></td><td></td><td></td><td></td></tr><tr><td></td><td></td><td></td><td></td></tr><tr><td></td><td></td><td></td><td></td></tr><tr><td></td><td></td><td></td><td></td></tr><tr><td></td><td></td><td></td><td></td></tr><tr><td></td><td></td><td></td><td></td></tr>
          </tbody>
        </table>
      </div>
      <div class="hscroll d-flex align-items-center">
        <svg width="15" height="9" viewBox="0 0 15 9"><path d="M9 1 5.5 4.5 9 8" fill="none" stroke="#333" stroke-width="1.5"/></svg>
        <div class="thumb"></div>
        <svg class="ms-auto" width="15" height="9" viewBox="0 0 15 9"><path d="M6 1l3.5 3.5L6 8" fill="none" stroke="#333" stroke-width="1.5"/></svg>
      </div>
      <div class="fold d-flex flex-column">
        <button>Search</button><button>Dependencies</button><button>Details</button><button>Preview</button>
      </div>
    </aside>

    <div class="d-flex flex-column flex-fill">
      <div class="doc-tabs d-flex">
        <a class="doc-tab active" href="#"><svg class="i12"><use href="#disc"/></svg>model2.prt<svg width="8" height="8"><use href="#docmod"/></svg><svg width="6" height="6" viewBox="0 0 8 8"><path d="m1 1 6 6m0-6L1 7" stroke="#fff" stroke-width="1.8"/></svg></a>
        <a class="doc-tab" href="#"><svg class="i12"><use href="#disc"/></svg>model3.prt<svg width="8" height="8"><use href="#docmod"/></svg></a>
      </div>
      <div class="scene flex-fill">
        <svg viewBox="315 168 942 519" preserveAspectRatio="xMidYMid slice" role="img" aria-label="Model view">
          <defs>
            <linearGradient id="wall" gradientUnits="userSpaceOnUse" x1="690" y1="420" x2="760" y2="480"><stop offset="0" stop-color="#f84a39"/><stop offset=".2" stop-color="#f84a39"/><stop offset=".34" stop-color="#fb5240"/><stop offset=".48" stop-color="#f74b39"/><stop offset="1" stop-color="#ff4c3b"/></linearGradient>
            <linearGradient id="topf" x1="0" x2="1"><stop offset="0" stop-color="#a1afb1"/><stop offset="1" stop-color="#a8b4b5"/></linearGradient>
            <linearGradient id="steel" x1="0" x2="1"><stop offset="0" stop-color="#24509a"/><stop offset=".5" stop-color="#c9d6e6"/><stop offset="1" stop-color="#24509a"/></linearGradient>
          </defs>
          <path d="M1064 335 1160 240 1191 657 1157 690H1090z" fill="#8b9798" stroke="#4c5353" stroke-width=".8"/>
          <path d="M441 248 527 166H643L545 263z" fill="url(#topf)" stroke="#4c5353" stroke-width=".8"/>
          <path d="M960 321 1056 226 1160 240 1064 335z" fill="url(#topf)" stroke="#4c5353" stroke-width=".8"/>
          <path d="M441 248 545 263 664 486Q667 491 674 491C715 491 725 495 760 499L873 513Q880 514 883 507C890 479 896 466 919 410L960 321 1064 335 1090 690H672L472 662z" fill="#848f8f" stroke="#4c5353" stroke-width=".8"/>
          <path d="M545 263 641 167 761 389Q764 395 772 395C812 395 820 398 840 400L919 410C896 466 890 479 883 507Q880 514 873 513L760 499C725 495 715 491 674 491Q667 491 664 486z" fill="url(#wall)"/>
          <path d="M641 168 761 389Q764 395 772 395C812 395 820 398 840 400L919 410 960 321 1056 226" fill="none" stroke="#c92e2b"/>
          <g fill="none" stroke="#222"><circle cx="757.5" cy="471.5" r="7.5" stroke="#5a3a35"/><path d="M757.5 461v21M747 471.5h21" stroke-width="3"/><path d="M757.5 462v19M748 471.5h19" stroke="#f6c6bd"/></g>
          <g fill="none" stroke="#a9a9b2" stroke-width=".9"><path d="m366 609 25 3 11-11-24-3zM366 609v25l26 3v-25M392 637l10-11v-25"/></g>
          <path d="M382 587h3l1 18h-4z" fill="#256a33"/><path d="m382 574 4 14q-4 2-8 0z" fill="#25803a"/>
          <path d="m397 617 19 3v3l-19-2z" fill="#a5202e"/><path d="m427 622-13-5q-1 4 0 8z" fill="#c92f3c"/>
          <path d="m378 621 2 3-10 8-2-3z" fill="#1746b8"/><path d="m364 636 7-9 5 6z" fill="#2257d2"/>
          <g font-family="Liberation Sans, sans-serif" font-size="9" fill="#555"><text x="378" y="572">Y</text><text x="430" y="627">X</text><text x="359" y="642">Z</text></g>
          <path d="m1131 616-23 39 5-4zM1134 616l22 37-5-3-15-24zM1112 657l20-2 23 3-22 1z" fill="url(#steel)"/>
          <g font-family="DejaVu Sans, sans-serif" fill="#214f94"><text x="1126" y="646" font-size="12" font-weight="700">ÜÇGEN</text><text x="1178" y="646" font-size="12">YAZILIM</text></g>
          <text x="1176" y="659" font-family="Liberation Sans, sans-serif" font-size="9" font-style="italic" fill="#214f94">en iyisi için...</text>
        </svg>
      </div>
    </div>

    <div class="side-bar d-flex flex-column">
      <button aria-label="Join Face"><svg class="i16"><use href="#join"/></svg></button>
      <button aria-label="Extract Geometry"><svg class="i16"><use href="#extract"/></svg></button>
      <button aria-label="Help"><svg class="i16"><use href="#help"/></svg></button>
      <button aria-label="Surface edges"><svg class="i16"><use href="#sheet"/></svg></button>
      <button aria-label="Trim Curve"><svg class="i16"><use href="#cross"/></svg></button>
      <button aria-label="Fold"><svg class="i16"><use href="#foldface"/></svg></button>
      <button aria-label="Hide"><svg class="i16"><use href="#hide"/></svg></button>
      <button aria-label="Edit feature"><svg class="i16"><use href="#wrench"/></svg></button>
      <button aria-label="Extrude"><svg class="i16"><use href="#extrude"/></svg></button>
      <button aria-label="Block"><svg class="i16"><use href="#cube"/></svg></button>
      <hr class="mx-1 my-1">
      <button class="expander mt-auto flex-shrink-0 justify-content-start ps-1" aria-label="Expand"><svg width="5" height="6" viewBox="0 0 5 6"><path d="M5 0v6L1 3z"/></svg></button>
    </div>
  </main>
  <footer class="status-row">Select objects and use MB3, or double-click an object</footer>
</div>
<script src="https://cdn.jsdelivr.net/npm/bootstrap@5.3.0/dist/js/bootstrap.bundle.min.js"></script>
</body>
</html>
